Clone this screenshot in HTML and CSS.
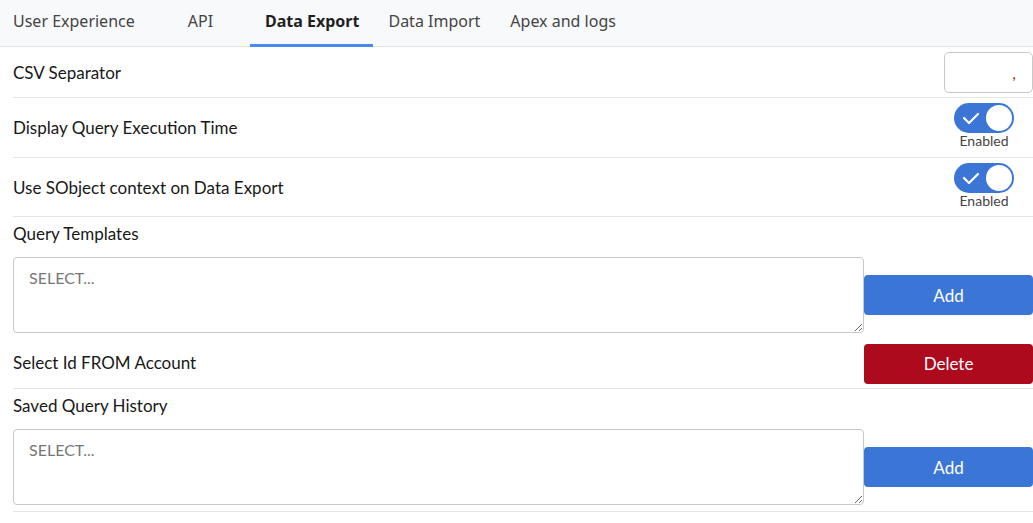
FILE: index.html
```html
<!DOCTYPE html>
<html>
<head>
<meta charset="utf-8">
<link rel="stylesheet" href="styles.css">
</head>
<body>
<nav class="tabs">
  <a class="tab">User Experience</a>
  <a class="tab">API</a>
  <a class="tab active">Data Export</a>
  <a class="tab">Data Import</a>
  <a class="tab">Apex and logs</a>
</nav>
<main class="content">
  <div class="row row-csv">
    <span class="label">CSV Separator</span>
    <input class="sep-input" type="text" value=",">
  </div>
  <div class="row row-toggle">
    <span class="label">Display Query Execution Time</span>
    <div class="toggle-wrap">
      <span class="toggle">
        <svg class="check" width="18" height="14" viewBox="0 0 18 14"><path d="M2 7 L7 12 L16 3" fill="none" stroke="#fff" stroke-width="2.2" stroke-linecap="round" stroke-linejoin="round"/></svg>
        <span class="knob"></span>
      </span>
      <span class="toggle-text">Enabled</span>
    </div>
  </div>
  <div class="row row-toggle row-toggle2">
    <span class="label">Use SObject context on Data Export</span>
    <div class="toggle-wrap">
      <span class="toggle">
        <svg class="check" width="18" height="14" viewBox="0 0 18 14"><path d="M2 7 L7 12 L16 3" fill="none" stroke="#fff" stroke-width="2.2" stroke-linecap="round" stroke-linejoin="round"/></svg>
        <span class="knob"></span>
      </span>
      <span class="toggle-text">Enabled</span>
    </div>
  </div>
  <section class="block">
    <div class="block-title">Query Templates</div>
    <div class="editor">
      <textarea class="query" placeholder="SELECT..."></textarea>
      <button class="btn btn-add">Add</button>
    </div>
    <div class="item">
      <span class="label">Select Id FROM Account</span>
      <button class="btn btn-delete">Delete</button>
    </div>
  </section>
  <section class="block block-last">
    <div class="block-title">Saved Query History</div>
    <div class="editor editor-last">
      <textarea class="query" placeholder="SELECT..."></textarea>
      <button class="btn btn-add">Add</button>
    </div>
  </section>
</main>
</body>
</html>
```

FILE: styles.css
```css
* { box-sizing: border-box; }
html, body { margin: 0; padding: 0; background: #fff; }
body {
  font-family: "Lato", "Open Sans", sans-serif;
  font-size: 17px;
  color: #181818;
  overflow: hidden;
}
.tabs {
  display: flex;
  height: 47px;
  background: #f8f9fa;
  border-bottom: 1px solid #e4e4e4;
  padding-left: 13px;
  font-family: "Noto Sans", sans-serif;
  font-size: 16px;
  color: #444;
}
.tab {
  display: flex;
  align-items: center;
  padding-top: 1px;
  padding-bottom: 3px;
  margin-right: 53px;
  border-bottom: 3px solid transparent;
  margin-bottom: -1px;
}
.tab:nth-child(2) { margin-right: 37px; }
.tab.active {
  font-weight: bold;
  color: #1f1f1f;
  border-bottom-color: #4a8af0;
  padding: 1px 14px 3px 15px;
  margin-right: 15px;
}
.tab:nth-child(4) { margin-right: 30px; }
.content { padding-left: 13px; }
.row {
  display: flex;
  align-items: center;
  justify-content: space-between;
  border-bottom: 1px solid #e5e5e5;
}
.row-csv { height: 51px; }
.sep-input {
  width: 89px;
  height: 41px;
  border: 1px solid #c9c9c9;
  border-radius: 5px;
  text-align: right;
  padding-right: 16px;
  font-family: "Lato", sans-serif;
  font-size: 16px;
  color: #8a2a0a;
  margin-right: 0;
}
.row-toggle { height: 60px; }
.row-toggle2 { height: 59px; }
.toggle-wrap {
  align-self: flex-start;
  display: flex;
  flex-direction: column;
  align-items: center;
  margin-right: 19px;
  padding-top: 5px;
}
.toggle {
  display: flex;
  align-items: center;
  justify-content: space-between;
  width: 60px;
  height: 30px;
  border-radius: 15px;
  background: #3b76d6;
  padding: 0 2px 0 8px;
}
.knob {
  width: 26px;
  height: 26px;
  border-radius: 50%;
  background: #fff;
}
.toggle-text {
  font-size: 14px;
  color: #444;
  margin-top: 0;
  line-height: 16px;
}
.block { border-bottom: 1px solid #e5e5e5; }
.block-title {
  padding-top: 7px;
  line-height: 20px;
  height: 40px;
}
.editor {
  display: flex;
  align-items: center;
}
.query {
  width: 851px;
  height: 76px;
  border: 1px solid #c9c9c9;
  border-radius: 4px;
  padding: 10px 15px;
  font-family: "Lato", sans-serif;
  font-size: 16px;
  color: #181818;
  resize: vertical;
}
.query::placeholder { color: #777; }
.btn {
  width: 169px;
  height: 40px;
  border: none;
  border-radius: 4px;
  color: #fff;
  font-family: "Lato", sans-serif;
  font-size: 17px;
  margin-left: auto;
}
.btn-add { background: #3b76d6; }
.btn-delete { background: #ae0a1e; }
.item {
  display: flex;
  align-items: center;
  height: 55px;
  padding-top: 6px;
}
.item .label { margin-top: -3px; }
.editor-last { padding-bottom: 6px; }
```
